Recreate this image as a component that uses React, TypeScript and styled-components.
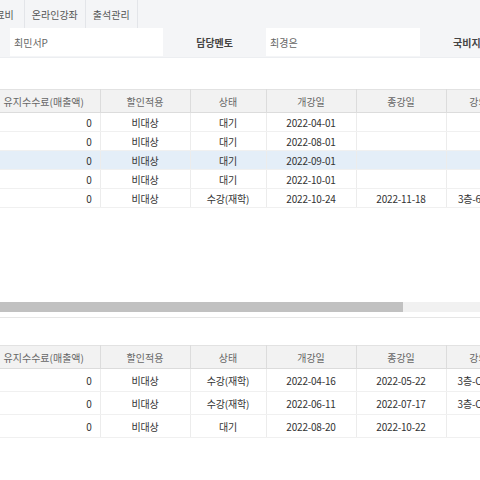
import React from 'react';
import styled, { createGlobalStyle } from 'styled-components';

const GlobalStyle = createGlobalStyle`
  html, body {
    margin: 0;
    padding: 0;
    background: #ffffff;
  }
  body {
    width: 480px;
    height: 480px;
    overflow: hidden;
    font-family: "Noto Sans CJK KR", "Noto Sans", sans-serif;
    font-size: 10px;
    color: #333;
  }
`;

const Page = styled.div`
  width: 480px;
  height: 480px;
  overflow: hidden;
  display: flex;
  flex-direction: column;
`;

const TabBar = styled.div`
  height: 28px;
  background: #f4f5f7;
  display: flex;
  align-items: stretch;
  overflow: hidden;
`;

const Tab = styled.div<{ $first?: boolean }>`
  display: flex;
  align-items: center;
  padding: 0 7px;
  color: #555;
  font-size: 10px;
  border-right: 1px solid #e3e5e9;
  white-space: nowrap;
  ${({ $first }) => $first && 'margin-left: -30px; padding-right: 10px;'}
`;

const InfoRow = styled.div`
  height: 29px;
  background: #f4f5f7;
  display: grid;
  grid-template-columns: 10px 153px 103px 154px 1fr;
  border-bottom: 1px solid #eceef1;
`;

const Label = styled.div<{ $lead?: boolean }>`
  display: flex;
  align-items: center;
  justify-content: ${({ $lead }) => ($lead ? 'flex-start' : 'flex-end')};
  padding: ${({ $lead }) => ($lead ? '0 0 0 33px' : '0 33px 0 0')};
  font-weight: 700;
  color: #444;
  white-space: nowrap;
  overflow: hidden;
`;

const Field = styled.div`
  background: #fff;
  display: flex;
  align-items: center;
  padding: 0 4px;
  color: #666;
  margin-bottom: 1px;
`;

const Spacer = styled.div<{ $h: number }>`
  height: ${({ $h }) => $h}px;
  flex-shrink: 0;
`;

const Viewport = styled.div`
  overflow: hidden;
  width: 480px;
`;

const Grid = styled.table`
  margin-left: -12px;
  border-collapse: collapse;
  table-layout: fixed;
  width: 532px;
`;

const HeadCell = styled.th`
  height: 22px;
  padding: 0;
  background: #f2f2f2;
  border-top: 1px solid #e2e2e2;
  border-bottom: 1px solid #dcdcdc;
  border-right: 1px solid #dcdcdc;
  color: #666;
  font-weight: 400;
  font-size: 10px;
  text-align: center;
  white-space: nowrap;
  overflow: hidden;
`;

const Row = styled.tr<{ $selected?: boolean; $h: number }>`
  height: ${({ $h }) => $h}px;
  background: ${({ $selected }) => ($selected ? '#e4eef8' : '#fff')};
`;

const Cell = styled.td<{ $right?: boolean }>`
  padding: ${({ $right }) => ($right ? '0 8px 0 0' : '0')};
  border-bottom: 1px solid #f0f0f0;
  border-right: 1px solid #ececec;
  text-align: ${({ $right }) => ($right ? 'right' : 'center')};
  white-space: nowrap;
  overflow: hidden;
  font-size: 10px;
  color: #333;
  letter-spacing: -0.2px;
`;

const ScrollTrack = styled.div`
  height: 10px;
  background: #f1f1f1;
  display: flex;
`;

const ScrollThumb = styled.div`
  width: 403px;
  background: #c1c1c1;
`;

const Divider = styled.div`
  height: 1px;
  background: #e6e6e6;
`;

const widths = [112, 90, 76, 90, 90, 74];
const heads = ['유지수수료(매출액)', '할인적용', '상태', '개강일', '종강일', '강의실'];

type Item = { state: string; start: string; end: string; room: string; selected?: boolean };

const top: Item[] = [
  { state: '대기', start: '2022-04-01', end: '', room: '' },
  { state: '대기', start: '2022-08-01', end: '', room: '' },
  { state: '대기', start: '2022-09-01', end: '', room: '', selected: true },
  { state: '대기', start: '2022-10-01', end: '', room: '' },
  { state: '수강(재학)', start: '2022-10-24', end: '2022-11-18', room: '3층-6강의실' },
];

const bottom: Item[] = [
  { state: '수강(재학)', start: '2022-04-16', end: '2022-05-22', room: '3층-C강의실' },
  { state: '수강(재학)', start: '2022-06-11', end: '2022-07-17', room: '3층-C강의실' },
  { state: '대기', start: '2022-08-20', end: '2022-10-22', room: '' },
];

const DataTable = ({ items, rowH }: { items: Item[]; rowH: number }) => (
  <Viewport>
    <Grid>
      <colgroup>
        {widths.map((w, i) => (
          <col key={i} style={{ width: w }} />
        ))}
      </colgroup>
      <thead>
        <tr>
          {heads.map((h) => (
            <HeadCell key={h}>{h}</HeadCell>
          ))}
        </tr>
      </thead>
      <tbody>
        {items.map((it, i) => (
          <Row key={i} $h={rowH} $selected={it.selected}>
            <Cell $right>0</Cell>
            <Cell>비대상</Cell>
            <Cell>{it.state}</Cell>
            <Cell>{it.start}</Cell>
            <Cell>{it.end}</Cell>
            <Cell>{it.room}</Cell>
          </Row>
        ))}
      </tbody>
    </Grid>
  </Viewport>
);

export default function App() {
  return (
    <Page>
      <GlobalStyle />
      <TabBar>
        <Tab $first>교재료비</Tab>
        <Tab>온라인강좌</Tab>
        <Tab>출석관리</Tab>
      </TabBar>
      <InfoRow>
        <Label />
        <Field>최민서P</Field>
        <Label>담당멘토</Label>
        <Field>최경은</Field>
        <Label $lead>국비지원</Label>
      </InfoRow>
      <Spacer $h={31} />
      <DataTable items={top} rowH={19} />
      <Spacer $h={94} />
      <ScrollTrack>
        <ScrollThumb />
      </ScrollTrack>
      <Spacer $h={5} />
      <Divider />
      <Spacer $h={27} />
      <DataTable items={bottom} rowH={23} />
    </Page>
  );
}
